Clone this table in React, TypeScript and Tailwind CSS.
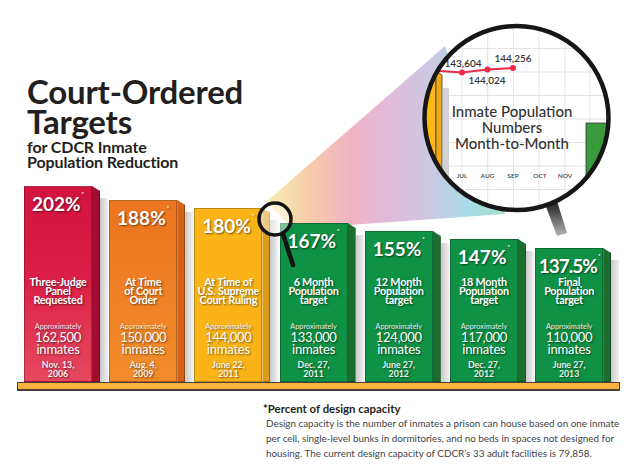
import React from "react";

type BarData = {
  pct: string;
  label: string[];
  num: string;
  date: string[];
  height: string;
  front: string;
  side: string;
  pctClass?: string;
};

const bars: BarData[] = [
  {
    pct: "202%",
    label: ["Three-Judge", "Panel", "Requested"],
    num: "162,500",
    date: ["Nov. 13,", "2006"],
    height: "h-[196px]",
    front: "bg-linear-to-b from-[#d3123d] via-[#dc1f48] to-[#e7475f]",
    side: "bg-[#a10e31]",
  },
  {
    pct: "188%",
    label: ["At Time", "of Court", "Order"],
    num: "150,000",
    date: ["Aug. 4,", "2009"],
    height: "h-[182px]",
    front: "bg-linear-to-b from-[#ec7420] to-[#f28c2a]",
    side: "bg-[#d4621b]",
  },
  {
    pct: "180%",
    label: ["At Time of", "U.S. Supreme", "Court Ruling"],
    num: "144,000",
    date: ["June 22,", "2011"],
    height: "h-[174px]",
    front: "bg-[#fbb417]",
    side: "bg-[#dc9c1a]",
  },
  {
    pct: "167%",
    label: ["6 Month", "Population", "target"],
    num: "133,000",
    date: ["Dec. 27,", "2011"],
    height: "h-[159px]",
    front: "bg-[#0f9245]",
    side: "bg-[#1c6e2f]",
  },
  {
    pct: "155%",
    label: ["12 Month", "Population", "target"],
    num: "124,000",
    date: ["June 27,", "2012"],
    height: "h-[151px]",
    front: "bg-[#0f9245]",
    side: "bg-[#1c6e2f]",
  },
  {
    pct: "147%",
    label: ["18 Month", "Population", "target"],
    num: "117,000",
    date: ["Dec. 27,", "2012"],
    height: "h-[143px]",
    front: "bg-[#0f9245]",
    side: "bg-[#1c6e2f]",
  },
  {
    pct: "137.5%",
    label: ["Final", "Population", "target"],
    num: "110,000",
    date: ["June 27,", "2013"],
    height: "h-[134px]",
    front: "bg-[#0f9245]",
    side: "bg-[#1c6e2f]",
    pctClass: "tracking-[-1px]",
  },
];

function Bar({ bar }: { bar: BarData }) {
  return (
    <div className={`flex w-[85.2px] shrink-0 ${bar.height}`}>
      <div
        className={`flex w-[68px] flex-col justify-between border border-black/25 text-center text-white [text-shadow:1px_1px_2px_rgba(0,0,0,0.55)] ${bar.front}`}
      >
        <div className={`pt-[7px] text-[19px] font-bold leading-[20px] ${bar.pctClass ?? ""}`}>
          {bar.pct}
          <sup className="relative -top-[3px] ml-px align-top text-[6px] leading-none">*</sup>
        </div>
        <div className="pb-[3px]">
          <div className="text-[10.8px] font-bold leading-[9.3px] tracking-[-0.2px]">
            {bar.label.map((l) => (
              <div key={l}>{l}</div>
            ))}
          </div>
          <div className="mt-[18px] text-[7.3px] leading-[8px] text-white/90">Approximately</div>
          <div className="text-[13px] leading-[12px] tracking-[-0.3px]">{bar.num}</div>
          <div className="text-[13px] leading-[12px] tracking-[-0.2px]">inmates</div>
          <div className="mt-[5.5px] text-[8.8px] font-bold leading-[9px] text-white/90">
            {bar.date.map((d) => (
              <div key={d}>{d}</div>
            ))}
          </div>
        </div>
      </div>
      <div
        className={`w-[8px] border-y border-r border-black/30 [clip-path:polygon(0_0,100%_5px,100%_100%,0_100%)] ${bar.side}`}
      />
      <div className="mt-[12px] w-[8px] bg-linear-to-r from-[#c9c9c9] to-[#f0f0f0]" />
    </div>
  );
}

function Cone() {
  return (
    <svg className="pointer-events-none absolute inset-0" width="642" height="469" viewBox="0 0 642 469">
      <defs>
        <linearGradient id="cone" gradientUnits="userSpaceOnUse" x1="268" y1="0" x2="505" y2="0">
          <stop offset="0" stopColor="#f8eeb2" />
          <stop offset="0.18" stopColor="#f6caa9" />
          <stop offset="0.35" stopColor="#efb4c4" />
          <stop offset="0.5" stopColor="#e2b9da" />
          <stop offset="0.68" stopColor="#cdc8e2" />
          <stop offset="0.85" stopColor="#a7dce6" />
          <stop offset="1" stopColor="#a6dfc6" />
        </linearGradient>
      </defs>
      <polygon points="266,202 445,46 505,214 293,229" fill="url(#cone)" />
    </svg>
  );
}

function Magnifiers() {
  const gridX = [410, 436, 462, 487.7, 513.4, 539, 565, 590, 616];
  const gridY = [25, 48.5, 72, 95.5, 119, 142.5, 166, 189.5];
  const months = [
    ["JUL", 462],
    ["AUG", 487.5],
    ["SEP", 513],
    ["OCT", 540],
    ["NOV", 565],
  ] as const;
  return (
    <svg className="pointer-events-none absolute inset-0" width="642" height="469" viewBox="0 0 642 469">
      <defs>
        <clipPath id="lens">
          <circle cx="516.5" cy="118" r="92" />
        </clipPath>
        <linearGradient id="handle" x1="0" y1="0" x2="0" y2="1">
          <stop offset="0" stopColor="#1a1a1a" />
          <stop offset="1" stopColor="#b5b5b5" />
        </linearGradient>
      </defs>

      {/* big lens handle */}
      <polygon points="545,204 557,201 567,233 557,236" fill="url(#handle)" />

      {/* big lens */}
      <g clipPath="url(#lens)">
        <rect x="420" y="20" width="200" height="200" fill="#ffffff" />
        {gridX.map((x) => (
          <line key={`x${x}`} x1={x} y1="20" x2={x} y2="220" stroke="#e3e3e3" strokeWidth="1" />
        ))}
        {gridY.map((y) => (
          <line key={`y${y}`} x1="420" y1={y} x2="620" y2={y} stroke="#e3e3e3" strokeWidth="1" />
        ))}
        <rect x="443" y="88" width="6" height="100" fill="#d2d2d2" />
        <rect x="405" y="71" width="31" height="160" fill="#fdb913" stroke="#3a3a3a" strokeWidth="0.8" />
        <polygon points="436,71 442,75 442,231 436,231" fill="#f1a815" stroke="#3a3a3a" strokeWidth="0.8" />
        <rect x="586" y="123" width="40" height="100" fill="#3b9a3c" stroke="#333" strokeWidth="0.8" />
        <polyline points="425,70 462,72.5 487.5,69.5 513,68" fill="none" stroke="#ec2a4a" strokeWidth="2" />
        <circle cx="462" cy="72.5" r="3" fill="#ec2a4a" />
        <circle cx="487.5" cy="69.5" r="3" fill="#ec2a4a" />
        <circle cx="513" cy="68" r="3" fill="#ec2a4a" />
        <g fontFamily="Lato, sans-serif" fontSize="10" fontWeight="600" fill="#333" textAnchor="middle">
          <text x="463" y="67">143,604</text>
          <text x="513" y="62">144,256</text>
          <text x="487" y="84">144,024</text>
        </g>
        <g fontFamily="Lato, sans-serif" fontSize="15" fontWeight="500" fill="#333" textAnchor="middle">
          <text x="512" y="117">Inmate Population</text>
          <text x="512" y="133">Numbers</text>
          <text x="512" y="149">Month-to-Month</text>
        </g>
        <g fontFamily="Lato, sans-serif" fontSize="6.5" fontWeight="600" fill="#444" textAnchor="middle">
          {months.map(([m, x]) => (
            <text key={m} x={x} y="177.5">
              {m}
            </text>
          ))}
        </g>
      </g>
      <circle cx="516.5" cy="118" r="92" fill="none" stroke="#161616" strokeWidth="4.5" />

      {/* small lens */}
      <line x1="283" y1="234" x2="293" y2="265" stroke="#141414" strokeWidth="4.5" strokeLinecap="round" />
      <circle cx="275" cy="219" r="16" fill="#ffffff" fillOpacity="0.45" stroke="#141414" strokeWidth="3.5" />
    </svg>
  );
}

export default function App() {
  return (
    <div className="relative h-[469px] w-[642px] overflow-hidden bg-white font-['Lato',sans-serif]">
      <Cone />

      <header className="relative h-[186px] pl-[27px] pt-[76px] text-[#231f20]">
        <h1 className="text-[33px] font-bold leading-[30px] tracking-[-0.2px]">
          Court-Ordered
          <br />
          Targets
        </h1>
        <p className="mt-[3px] text-[16px] font-bold leading-[15px] tracking-[-0.1px]">
          for CDCR Inmate
          <br />
          Population Reduction
        </p>
      </header>

      <div className="relative flex h-[196px] items-end pl-[24px]">
        {bars.map((b) => (
          <Bar key={b.pct} bar={b} />
        ))}
      </div>

      <div className="relative ml-[17px] h-[9px] w-[603px] border border-b-2 border-[#4a4035] bg-[#fbb040]" />

      <div className="relative ml-[263px] mt-[11px]">
        <p className="text-[11.4px] font-bold leading-[14px] text-[#231f20]">*Percent of design capacity</p>
        <div className="pl-[3px] text-[9.9px] leading-[15px] text-[#444]">
          <span className="block whitespace-nowrap">
            Design capacity is the number of inmates a prison can house based on one inmate
          </span>
          <span className="block whitespace-nowrap">
            per cell, single-level bunks in dormitories, and no beds in spaces not designed for
          </span>
          <span className="block whitespace-nowrap">
            housing. The current design capacity of CDCR’s 33 adult facilities is 79,858.
          </span>
        </div>
      </div>

      <Magnifiers />
    </div>
  );
}
